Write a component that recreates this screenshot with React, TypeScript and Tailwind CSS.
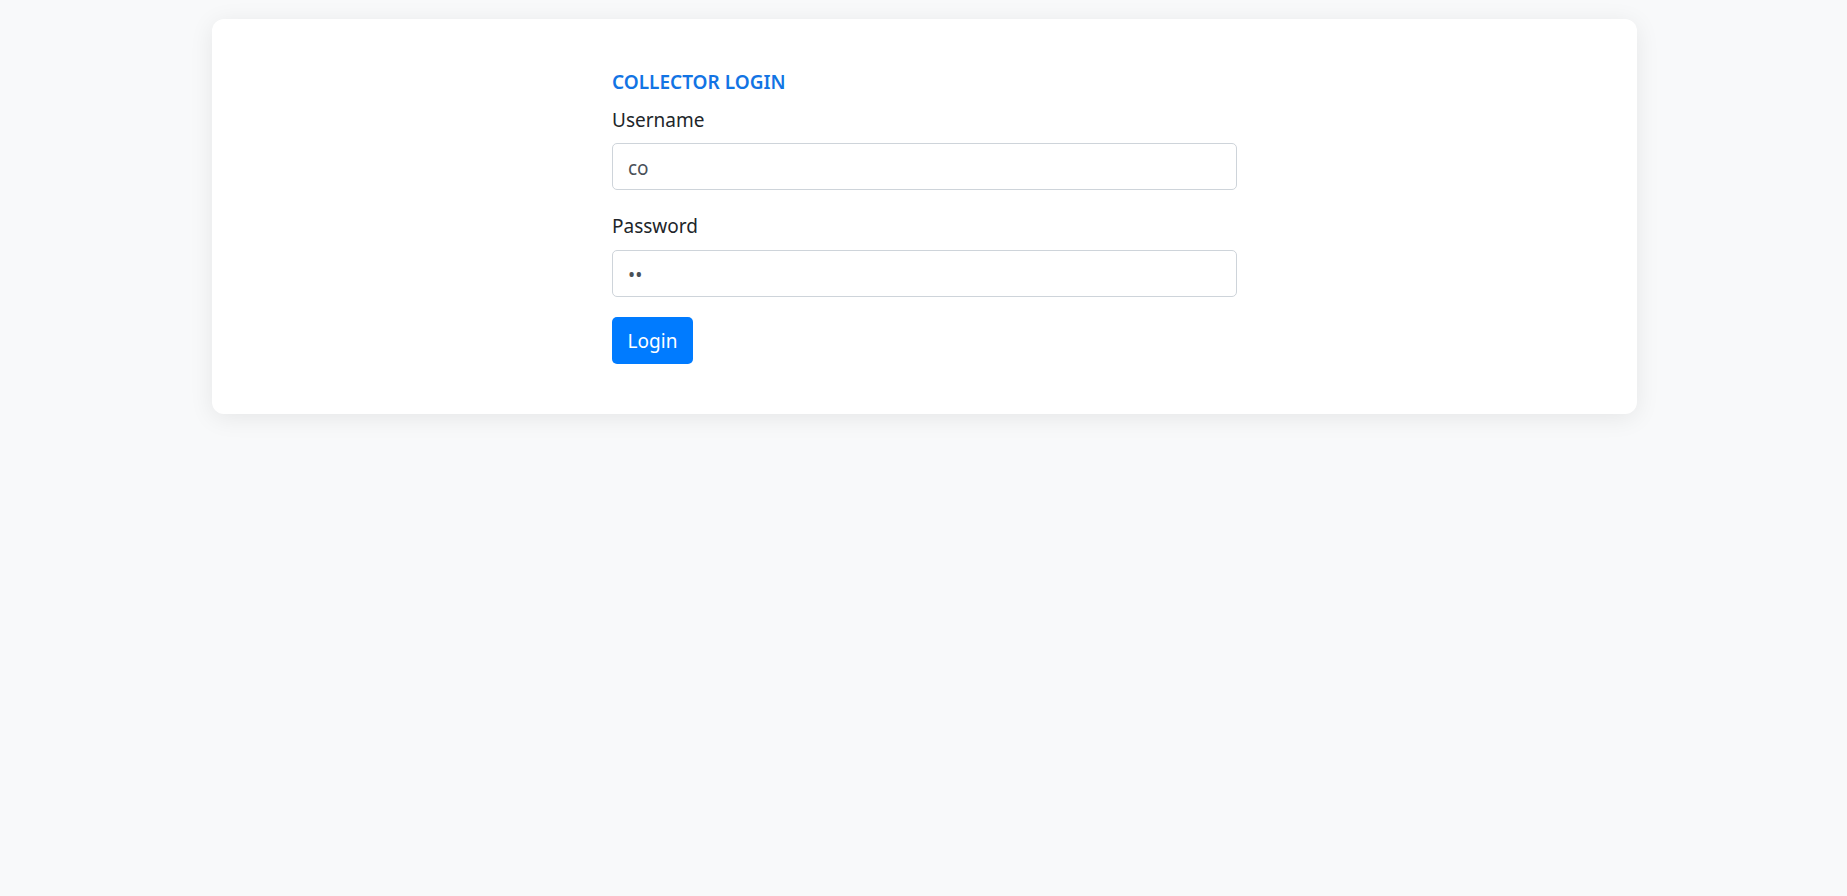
import React from "react";

const App = () => {
  return (
    <div className="min-h-screen bg-[#f8f9fa] pt-[19px] font-['Noto_Sans',sans-serif] text-[#212529]">
      <div className="ml-[212px] w-[1425px] h-[395px] rounded-[12px] bg-white shadow-[0_4px_24px_rgba(0,0,0,0.08)] pt-[51px]">
        <form className="mx-auto w-[625px] flex flex-col items-start" onSubmit={(e) => e.preventDefault()}>
          <h6 className="text-[19px] leading-[24px] font-semibold text-[#1274e4]">COLLECTOR LOGIN</h6>
          <label className="mt-[14px] text-[19px] leading-[24px]">Username</label>
          <input
            readOnly
            value="co"
            className="mt-[11px] w-full h-[47px] rounded-[5px] border border-[#ced4da] px-[15px] pt-[3px] text-[19px] text-[#495057] outline-none"
          />
          <label className="mt-[24px] text-[19px] leading-[24px]">Password</label>
          <input
            readOnly
            type="password"
            value="ab"
            className="mt-[12px] w-full h-[47px] rounded-[5px] border border-[#ced4da] px-[15px] pt-[2px] text-[19px] text-[#495057] outline-none"
          />
          <button className="mt-[20px] h-[47px] w-[81px] rounded-[5px] bg-[#007bff] pt-[2px] text-[19px] text-white">
            Login
          </button>
        </form>
      </div>
    </div>
  );
};

export default App;
